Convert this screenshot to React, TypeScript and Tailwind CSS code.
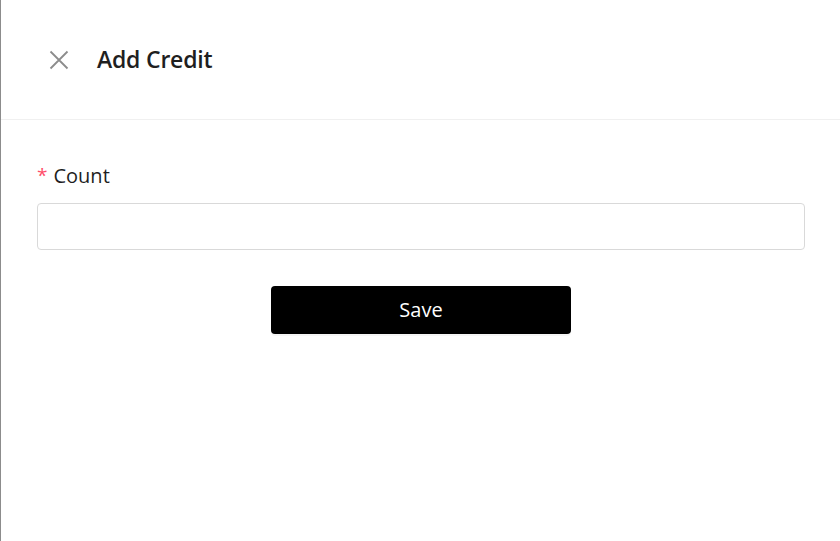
export default function App() {
  return (
    <div
      className="h-[541px] w-[840px] border-l border-[#8c8c8c] bg-white text-[#1f1f1f]"
      style={{ fontFamily: '"Open Sans", "Noto Sans", sans-serif' }}
    >
      <div className="flex h-[120px] items-center gap-[28px] border-b border-[#f0f0f0] pl-[48px]">
        <button className="flex h-5 w-5 items-center justify-center text-[#8c8c8c]">
          <svg width="20" height="20" viewBox="0 0 20 20" fill="none" stroke="currentColor" strokeWidth="1.8">
            <path d="M1.5 1.5 L18.5 18.5 M18.5 1.5 L1.5 18.5" />
          </svg>
        </button>
        <h2 className="text-[23px] font-semibold tracking-[-0.2px] text-[#1f1f1f]">Add Credit</h2>
      </div>

      <div className="pl-[36px] pr-[35px] pt-[42px]">
        <label className="flex items-center gap-[6px] text-[20px] leading-[27px]">
          <span className="text-[19px] text-[#ff4d6a]">*</span>
          <span>Count</span>
        </label>
        <input
          type="text"
          className="mt-[14px] h-[47px] w-full rounded-[4px] border border-[#d9d9d9] px-3 text-[16px] outline-none"
        />
        <div className="mt-[36px] flex justify-center">
          <button className="h-[48px] w-[300px] rounded-[4px] bg-black text-[20px] text-white shadow-[0_2px_0_rgba(0,0,0,0.04)]">
            Save
          </button>
        </div>
      </div>
    </div>
  );
}
